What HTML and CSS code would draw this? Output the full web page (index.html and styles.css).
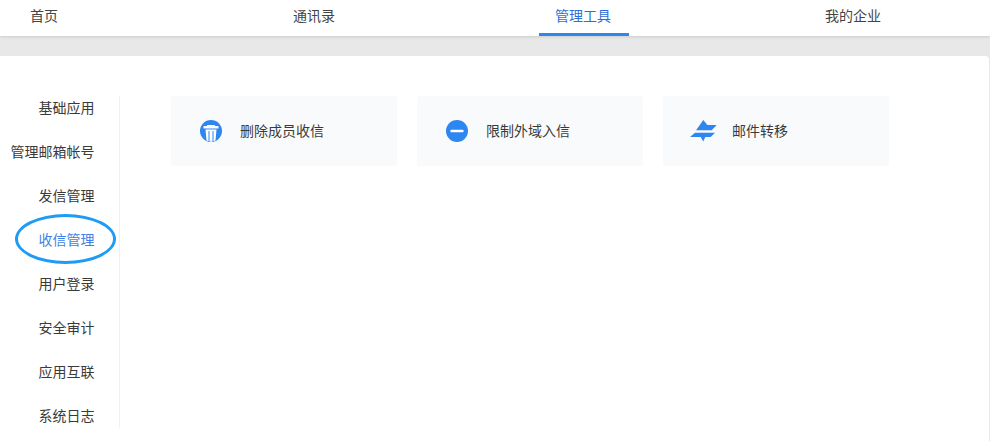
FILE: index.html
```html
<!DOCTYPE html>
<html lang="zh-CN">
<head>
<meta charset="utf-8">
<title>管理工具</title>
<link rel="stylesheet" href="styles.css">
</head>
<body>
<header class="topbar">
  <nav class="nav">
    <a class="nav-item">首页</a>
    <a class="nav-item">通讯录</a>
    <a class="nav-item active">管理工具</a>
    <a class="nav-item">我的企业</a>
  </nav>
</header>
<main class="panel">
  <aside class="side">
    <a class="side-item">基础应用</a>
    <a class="side-item">管理邮箱帐号</a>
    <a class="side-item">发信管理</a>
    <a class="side-item current">收信管理<span class="ring"></span></a>
    <a class="side-item">用户登录</a>
    <a class="side-item">安全审计</a>
    <a class="side-item">应用互联</a>
    <a class="side-item">系统日志</a>
  </aside>
  <section class="cards">
    <div class="card">
      <svg class="icon" viewBox="0 0 22 22" aria-hidden="true">
        <circle cx="11" cy="11" r="11" fill="#2e86f0"/>
        <rect x="3.500" y="6" width="15" height="2.500" rx=".5" fill="#fff"/>
        <rect x="7" y="5" width="8" height="2" fill="#fff"/>
        <path d="M5.500 9.500h11L15.500 20.500Q11 23 6.500 20.500z" fill="#fff"/>
        <path d="M8.500 11h1v11h-1zM12.500 11h1v11h-1z" fill="#2e86f0"/>
      </svg>
      <span class="card-text">删除成员收信</span>
    </div>
    <div class="card">
      <svg class="icon" viewBox="0 0 22 22" aria-hidden="true">
        <circle cx="11" cy="11" r="11" fill="#2e86f0"/>
        <rect x="4.500" y="9.800" width="13" height="2.400" rx=".6" fill="#fff"/>
      </svg>
      <span class="card-text">限制外域入信</span>
    </div>
    <div class="card">
      <svg class="icon swap" viewBox="0 0 27 22" aria-hidden="true">
        <path d="M13.300 0L17.300 5H26.700L21.700 10.300H6z" fill="#2e86f0"/>
        <path d="M5 12.700H25L20.700 17H15.300L13.300 21.500L10.700 17H0z" fill="#2e86f0"/>
      </svg>
      <span class="card-text">邮件转移</span>
    </div>
  </section>
</main>
</body>
</html>
```
FILE: styles.css
```css
* { box-sizing: border-box; }
html, body { margin: 0; padding: 0; }
body {
  height: 441px;
  overflow: hidden;
  background: #e8e8e8;
  font-family: "Noto Sans CJK SC", "Liberation Sans", sans-serif;
  font-size: 14px;
  color: #333;
}
.topbar {
  height: 36px;
  background: #fff;
  box-shadow: 0 1px 3px rgba(0, 0, 0, .12);
  position: relative;
}
.nav {
  display: flex;
  gap: 180px;
  margin-left: -1px;
}
.nav-item {
  width: 90px;
  height: 36px;
  line-height: 30px;
  text-align: center;
  color: #444;
}
.nav-item:nth-child(n+3) { padding-right: 2px; }
.nav-item.active {
  color: #2d6fd6;
  border-bottom: 3px solid #2e86f0;
}
.panel {
  margin-top: 20px;
  width: 989px;
  height: 385px;
  background: #fff;
  border-radius: 0 4px 0 0;
  display: flex;
  align-items: flex-start;
  padding-top: 40px;
}
.side {
  width: 120px;
  height: 332px;
  padding-right: 24.500px;
  border-right: 1px solid #f0f0f0;
  display: flex;
  flex-direction: column;
  align-items: flex-end;
}
.side-item {
  position: relative;
  flex: none;
  height: 44px;
  line-height: 22px;
  white-space: nowrap;
  color: #3a3a3a;
}
.side-item.current { color: #3f7fe8; }
.ring {
  position: absolute;
  left: -23.500px;
  top: -14px;
  width: 101px;
  height: 50px;
  border: 3px solid #1e9bf5;
  border-radius: 50%;
}
.cards {
  display: flex;
  gap: 20px;
  margin-left: 51px;
}
.card {
  width: 226px;
  height: 70px;
  background: #f9fafc;
  border-radius: 2px;
  display: flex;
  align-items: center;
  padding-left: 29px;
}
.icon {
  width: 22px;
  height: 22px;
  margin-right: 18px;
  flex: none;
}
.icon.swap {
  width: 27px;
  margin-left: -2px;
  margin-right: 15px;
}
.card-text {
  color: #3a3a3a;
  margin-bottom: 2px;
}
```
